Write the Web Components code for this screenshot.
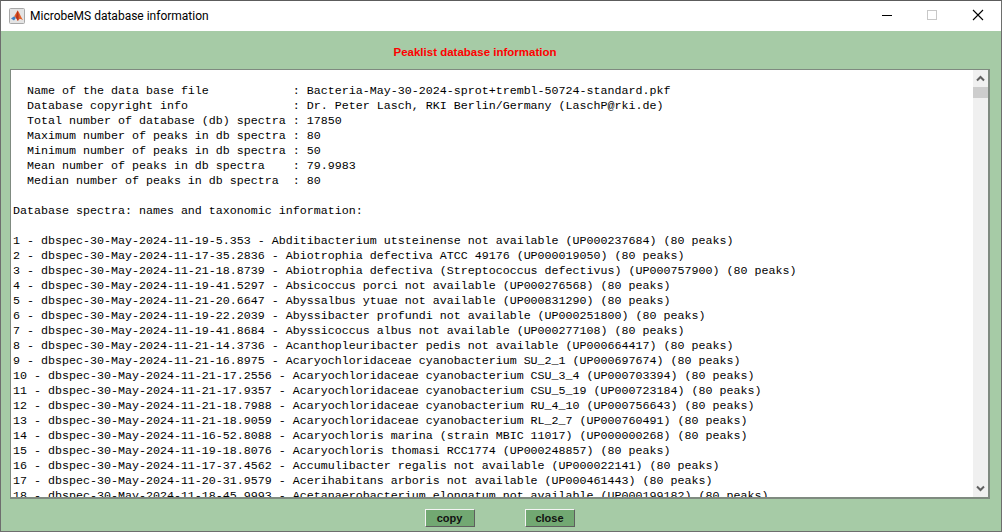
<!DOCTYPE html>
<html>
<head>
<meta charset="utf-8">
<title>MicrobeMS database information</title>
<style>
  html, body { margin: 0; padding: 0; height: 100%; overflow: hidden; background: #a6cba6; }
</style>
</head>
<body>
<info-window>
  <title-bar slot="bar">MicrobeMS database information</title-bar>
  <info-heading slot="heading">Peaklist database information</info-heading>
  <text-panel slot="panel">  Name of the data base file            : Bacteria-May-30-2024-sprot+trembl-50724-standard.pkf
  Database copyright info               : Dr. Peter Lasch, RKI Berlin/Germany (LaschP@rki.de)
  Total number of database (db) spectra : 17850
  Maximum number of peaks in db spectra : 80
  Minimum number of peaks in db spectra : 50
  Mean number of peaks in db spectra    : 79.9983
  Median number of peaks in db spectra  : 80

Database spectra: names and taxonomic information:

1 - dbspec-30-May-2024-11-19-5.353 - Abditibacterium utsteinense not available (UP000237684) (80 peaks)
2 - dbspec-30-May-2024-11-17-35.2836 - Abiotrophia defectiva ATCC 49176 (UP000019050) (80 peaks)
3 - dbspec-30-May-2024-11-21-18.8739 - Abiotrophia defectiva (Streptococcus defectivus) (UP000757900) (80 peaks)
4 - dbspec-30-May-2024-11-19-41.5297 - Absicoccus porci not available (UP000276568) (80 peaks)
5 - dbspec-30-May-2024-11-21-20.6647 - Abyssalbus ytuae not available (UP000831290) (80 peaks)
6 - dbspec-30-May-2024-11-19-22.2039 - Abyssibacter profundi not available (UP000251800) (80 peaks)
7 - dbspec-30-May-2024-11-19-41.8684 - Abyssicoccus albus not available (UP000277108) (80 peaks)
8 - dbspec-30-May-2024-11-21-14.3736 - Acanthopleuribacter pedis not available (UP000664417) (80 peaks)
9 - dbspec-30-May-2024-11-21-16.8975 - Acaryochloridaceae cyanobacterium SU_2_1 (UP000697674) (80 peaks)
10 - dbspec-30-May-2024-11-21-17.2556 - Acaryochloridaceae cyanobacterium CSU_3_4 (UP000703394) (80 peaks)
11 - dbspec-30-May-2024-11-21-17.9357 - Acaryochloridaceae cyanobacterium CSU_5_19 (UP000723184) (80 peaks)
12 - dbspec-30-May-2024-11-21-18.7988 - Acaryochloridaceae cyanobacterium RU_4_10 (UP000756643) (80 peaks)
13 - dbspec-30-May-2024-11-21-18.9059 - Acaryochloridaceae cyanobacterium RL_2_7 (UP000760491) (80 peaks)
14 - dbspec-30-May-2024-11-16-52.8088 - Acaryochloris marina (strain MBIC 11017) (UP000000268) (80 peaks)
15 - dbspec-30-May-2024-11-19-18.8076 - Acaryochloris thomasi RCC1774 (UP000248857) (80 peaks)
16 - dbspec-30-May-2024-11-17-37.4562 - Accumulibacter regalis not available (UP000022141) (80 peaks)
17 - dbspec-30-May-2024-11-20-31.9579 - Acerihabitans arboris not available (UP000461443) (80 peaks)
18 - dbspec-30-May-2024-11-18-45.9993 - Acetanaerobacterium elongatum not available (UP000199182) (80 peaks)
</text-panel>
  <bevel-button slot="buttons">copy</bevel-button>
  <bevel-button slot="buttons">close</bevel-button>
</info-window>

<script>
class InfoWindow extends HTMLElement {
  constructor() {
    super();
    const shadow = this.attachShadow({mode: 'open'});
    shadow.innerHTML = `
    <style>
    :host {
      display: flex;
      flex-direction: column;
      box-sizing: border-box;
      width: 1002px;
      height: 532px;
      border: 1px solid #6e6e6e;
      border-top-color: #5c5c5c;
      background: #a6cba6;
    }
    .body {
      flex: 1;
      min-height: 0;
      display: flex;
      flex-direction: column;
      padding: 0 11px 4px 9px;
    }
    .buttons {
      display: flex;
      justify-content: center;
      gap: 50px;
      padding: 10px 0 0 0;
      margin-left: -1px;
    }
    </style>
    <slot name="bar"></slot>
    <div class="body">
      <slot name="heading"></slot>
      <slot name="panel"></slot>
      <div class="buttons"><slot name="buttons"></slot></div>
    </div>
    `;
  }
}

class TitleBar extends HTMLElement {
  constructor() {
    super();
    const shadow = this.attachShadow({mode: 'open'});
    shadow.innerHTML = `
    <style>
    :host {
      display: flex;
      align-items: center;
      height: 30px;
      background: #fff;
      color: #000;
      font: 12px Roboto, "Noto Sans", sans-serif;
    }
    .logo { width: 16px; height: 16px; margin: 0 5px 0 8px; flex: none; }
    .label { flex: 1; }
    .ctl { width: 46px; height: 30px; display: flex; align-items: center; justify-content: center; box-sizing: border-box; }
    .ctl.min { padding-left: 2px; }
    .ctl svg { display: block; margin-bottom: 2px; }
    </style>
    <svg class="logo" viewBox="0 0 16 16">
      <rect x=".5" y=".5" width="15" height="15" rx="1" fill="#e4e4e4" stroke="#a8a8a8"/>
      <path d="M2 10.5 5.2 8.2 7 9.8 5 12.6z" fill="#3f7fc4"/>
      <path d="M5.2 8.2 8.6 2.6C9.8 3 11.4 8.6 14 12 11.8 11 10.4 9.8 9 13 8 12 7.6 10.6 7 9.8z" fill="#e2612a"/>
      <path d="M8.6 2.6C7.8 4.6 7.4 7.4 7 9.8L9 13C9.8 10.4 10.2 8 8.6 2.6z" fill="#b8341c"/>
    </svg>
    <span class="label"><slot></slot></span>
    <div class="ctl min"><svg width="10" height="10"><path d="M0 5.5H10" stroke="#000"/></svg></div>
    <div class="ctl"><svg width="10" height="10"><rect x=".5" y=".5" width="9" height="9" fill="none" stroke="#c8c8c8"/></svg></div>
    <div class="ctl"><svg width="12" height="12"><path d="M1 1 11 11M11 1 1 11" stroke="#000" stroke-width="1.1"/></svg></div>
    `;
  }
}

class InfoHeading extends HTMLElement {
  constructor() {
    super();
    const shadow = this.attachShadow({mode: 'open'});
    shadow.innerHTML = `
    <style>
    :host {
      display: block;
      box-sizing: border-box;
      height: 38px;
      padding: 14px 50px 0 0;
      text-align: center;
      color: #f00;
      font: bold 11.5px/14px "Liberation Sans", Arial, sans-serif;
    }
    </style>
    <slot></slot>
    `;
  }
}

class TextPanel extends HTMLElement {
  constructor() {
    super();
    const shadow = this.attachShadow({mode: 'open'});
    shadow.innerHTML = `
    <style>
    :host {
      display: flex;
      height: 430px;
      box-sizing: border-box;
      border: 1px solid #7f8a80;
      border-width: 1px 2px 2px 1px;
      background: #fff;
      overflow: hidden;
    }
    .text {
      flex: 1;
      min-width: 0;
      overflow: hidden;
      padding: 14px 0 0 2px;
      color: #000;
      white-space: pre;
      font: 11.67px/15px "Liberation Mono", "Courier New", monospace;
    }
    .scroll {
      flex: none;
      width: 15px;
      background: #f0f0f0;
      display: flex;
      flex-direction: column;
      align-items: center;
    }
    .arrow { height: 17px; display: flex; align-items: center; justify-content: center; background: #f0f0f0; width: 100%; }
    .thumb { height: 11px; width: 100%; background: #cdcdcd; }
    .track { flex: 1; }
    </style>
    <div class="text"><slot></slot></div>
    <div class="scroll">
      <div class="arrow"><svg width="9" height="7"><path d="M1 5.5 4.5 2 8 5.5" fill="none" stroke="#606060" stroke-width="2"/></svg></div>
      <div class="thumb"></div>
      <div class="track"></div>
      <div class="arrow"><svg width="9" height="7"><path d="M1 1.5 4.5 5 8 1.5" fill="none" stroke="#606060" stroke-width="2"/></svg></div>
    </div>
    `;
  }
}

class BevelButton extends HTMLElement {
  constructor() {
    super();
    const shadow = this.attachShadow({mode: 'open'});
    shadow.innerHTML = `
    <style>
    :host {
      display: flex;
      align-items: center;
      justify-content: center;
      box-sizing: border-box;
      width: 50px;
      height: 18px;
      background: #72a872;
      color: #111;
      border: 1px solid;
      border-color: #f4f4f4 #5e5e5e #5e5e5e #f4f4f4;
      font: bold 11px "Liberation Sans", Arial, sans-serif;
      cursor: default;
    }
    </style>
    <slot></slot>
    `;
  }
}

customElements.define("info-window", InfoWindow);
customElements.define("title-bar", TitleBar);
customElements.define("info-heading", InfoHeading);
customElements.define("text-panel", TextPanel);
customElements.define("bevel-button", BevelButton);
</script>
</body>
</html>
